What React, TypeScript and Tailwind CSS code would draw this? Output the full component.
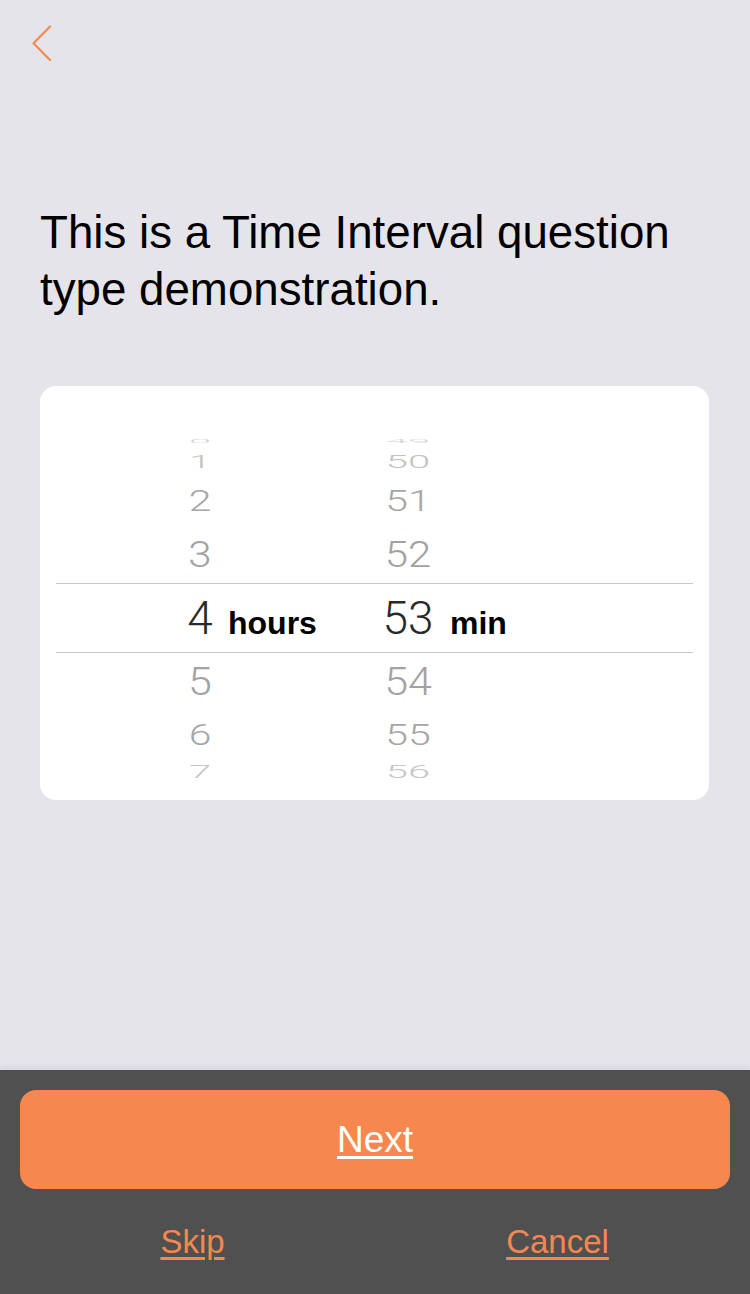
const digits = "font-['Roboto','Liberation_Sans',sans-serif] font-light";

type Row = {
  hr: string;
  mn: string;
  h: string;
  size: string;
  squash: string;
  color: string;
};

const above: Row[] = [
  { hr: "0", mn: "49", h: "h-[20px]", size: "text-[40px]", squash: "scale-y-[0.12]", color: "text-[#d4d4d4]" },
  { hr: "1", mn: "50", h: "h-[22px]", size: "text-[40px]", squash: "scale-y-[0.45]", color: "text-[#c2c2c2]" },
  { hr: "2", mn: "51", h: "h-[56px]", size: "text-[41px]", squash: "scale-y-[0.72]", color: "text-[#a6a6a6]" },
  { hr: "3", mn: "52", h: "h-[52px]", size: "text-[42px]", squash: "scale-y-[0.88]", color: "text-[#a2a2a2]" },
];

const below: Row[] = [
  { hr: "5", mn: "54", h: "h-[56px]", size: "text-[43px]", squash: "scale-y-[0.92]", color: "text-[#a2a2a2]" },
  { hr: "6", mn: "55", h: "h-[52px]", size: "text-[41px]", squash: "scale-y-[0.72]", color: "text-[#a6a6a6]" },
  { hr: "7", mn: "56", h: "h-[22px]", size: "text-[40px]", squash: "scale-y-[0.45]", color: "text-[#c6c6c6]" },
];

function WheelRow({ row }: { row: Row }) {
  return (
    <div className={`grid grid-rows-1 grid-cols-[132px_56px_149px_62px_1fr] items-center ${row.h}`}>
      <div />
      <span className={`block text-center leading-none ${digits} ${row.size} ${row.squash} ${row.color}`}>
        {row.hr}
      </span>
      <div />
      <span className={`block text-center leading-none ${digits} ${row.size} ${row.squash} ${row.color}`}>
        {row.mn}
      </span>
      <div />
    </div>
  );
}

export default function App() {
  return (
    <div className="flex min-h-screen flex-col bg-[#e5e4ea] font-['Liberation_Sans',Arial,sans-serif]">
      {/* Nav */}
      <div className="h-[88px] pl-[32px] pt-[25px]">
        <svg width="20" height="37" viewBox="0 0 20 37" fill="none">
          <path
            d="M18 1.5 L1.5 18.2 L18 35"
            stroke="#f6874f"
            strokeWidth="2.2"
            strokeLinecap="round"
            strokeLinejoin="round"
          />
        </svg>
      </div>

      {/* Question */}
      <h1 className="mt-[116px] px-[40px] text-[45.7px] font-normal leading-[57px] text-black">
        This is a Time Interval question type demonstration.
      </h1>

      {/* Picker */}
      <div className="ml-[40px] mt-[68px] w-[669px] rounded-[16px] bg-white pb-[17px] pt-[45px]">
        {above.map((r) => (
          <WheelRow key={r.hr} row={r} />
        ))}
        <div className="mx-4 mt-[2px] h-px bg-[#c9c8cd]" />
        <div className="grid h-[68px] grid-cols-[132px_56px_149px_62px_1fr] items-baseline">
          <div />
          <span className={`text-center text-[46px] leading-[68px] text-[#2a2a2a] ${digits}`}>4</span>
          <span className="text-[32px] font-bold text-black">hours</span>
          <span className={`text-center text-[46px] leading-[68px] text-[#2a2a2a] ${digits}`}>53</span>
          <span className="pl-[11px] text-[32px] font-bold text-black">min</span>
        </div>
        <div className="mx-4 h-px bg-[#c9c8cd]" />
        {below.map((r) => (
          <WheelRow key={r.hr} row={r} />
        ))}
      </div>

      <div className="flex-1" />

      {/* Footer actions */}
      <div className="flex h-[224px] flex-col bg-[#505050] px-[20px] pt-[20px] shadow-[0_-2px_6px_rgba(0,0,0,0.08)]">
        <button className="flex h-[99px] w-full items-center justify-center rounded-[16px] bg-[#f6874f]">
          <span className="text-[37px] text-white underline decoration-[3px] underline-offset-[4px]">Next</span>
        </button>
        <div className="-mx-[10px] grid flex-1 grid-cols-2 items-center">
          <span className="text-center text-[33px] text-[#f6874f] underline decoration-[3px] underline-offset-[4px]">
            Skip
          </span>
          <span className="text-center text-[33px] text-[#f6874f] underline decoration-[3px] underline-offset-[4px]">
            Cancel
          </span>
        </div>
      </div>
    </div>
  );
}
